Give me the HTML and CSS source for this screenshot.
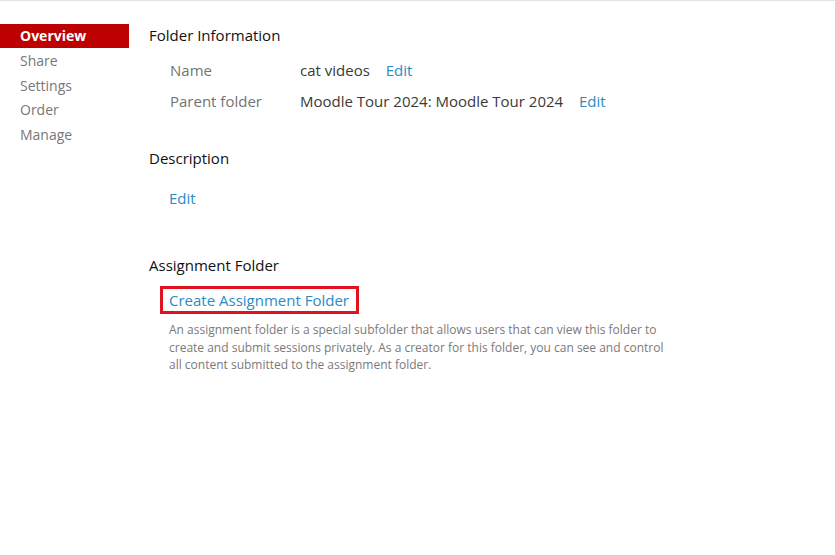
FILE: index.html
```html
<!DOCTYPE html>
<html>
<head>
<meta charset="utf-8">
<link rel="stylesheet" href="styles.css">
</head>
<body>
<div class="topline"></div>
<div class="page">
  <nav class="side">
    <div class="nav-item active">Overview</div>
    <div class="nav-item">Share</div>
    <div class="nav-item">Settings</div>
    <div class="nav-item">Order</div>
    <div class="nav-item">Manage</div>
  </nav>
  <main class="main">
    <h2 class="sec-title">Folder Information</h2>
    <div class="info">
      <div class="label">Name</div>
      <div class="value">cat videos <a class="link">Edit</a></div>
      <div class="label">Parent folder</div>
      <div class="value">Moodle Tour 2024: Moodle Tour 2024 <a class="link">Edit</a></div>
    </div>
    <h2 class="sec-title desc-title">Description</h2>
    <div class="desc-edit"><a class="link">Edit</a></div>
    <h2 class="sec-title assign-title">Assignment Folder</h2>
    <div class="assign">
      <a class="link create">Create Assignment Folder</a>
      <p class="help">An assignment folder is a special subfolder that allows users that can view this folder to create and submit sessions privately. As a creator for this folder, you can see and control all content submitted to the assignment folder.</p>
    </div>
  </main>
</div>
</body>
</html>
```
FILE: styles.css
```css
html, body { margin: 0; padding: 0; background: #fff; }
body { font-family: "Open Sans", "Noto Sans", sans-serif; color: #222; width: 835px; height: 555px; overflow: hidden; }
.topline { height: 2px; border-top: 1px solid #e2e2e2; }
.page { display: flex; padding-top: 21px; }
.side { width: 129px; flex: none; display: flex; flex-direction: column; }
.nav-item { font-size: 14px; color: #777; height: 24.5px; line-height: 24.5px; padding-left: 20px; }
.nav-item.active { background: #bd0000; color: #fff; font-weight: 700; line-height: 24px; height: 24px; margin-bottom: 1px; }
.main { padding-left: 20px; }
.sec-title { font-size: 15px; font-weight: 400; color: #111; margin: 0; line-height: 22px; }
.info { display: grid; grid-template-columns: 130px auto; row-gap: 9px; margin: 13px 0 0 21px; font-size: 15px; line-height: 22px; }
.label { color: #737373; }
.value { color: #3a3a3a; }
.link { color: #2b8cc4; text-decoration: none; margin-left: 11px; }
.value .link { margin-left: 12px; }
.desc-title { margin-top: 35px; }
.desc-edit { margin: 18px 0 0 20px; font-size: 15px; line-height: 22px; }
.desc-edit .link { margin-left: 0; }
.assign-title { margin-top: 45px; }
.assign { margin: 10px 0 0 11px; }
.create { display: inline-block; margin: 0; font-size: 15px; line-height: 20px; padding: 1px 7px 1px 6px; border: 3px solid #e0121f; }
.help { margin: 7px 0 0 9px; font-size: 12px; line-height: 17.5px; color: #7a7a7a; width: 510px; }
```
